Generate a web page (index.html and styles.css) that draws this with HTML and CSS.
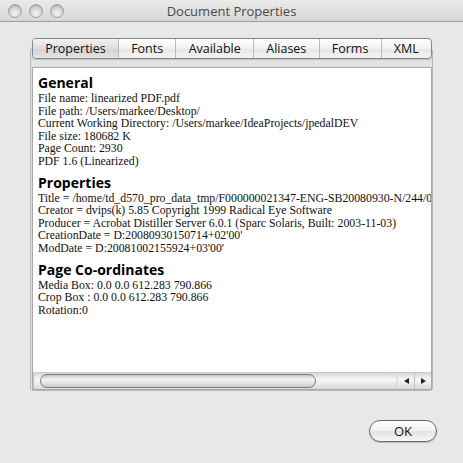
FILE: index.html
```html
<!DOCTYPE html>
<html lang="en">
<head>
  <meta charset="UTF-8">
  <title>Document Properties</title>
  <link rel="stylesheet" href="styles.css">
</head>
<body>
  <div class="window">
    <div class="titlebar">
      <div class="lights">
        <span class="light"></span>
        <span class="light"></span>
        <span class="light"></span>
      </div>
      <div class="title">Document Properties</div>
      <div></div>
    </div>

    <div class="dialog">
      <div class="tabpane">
        <ul class="tabs">
          <li class="tab active">Properties</li>
          <li class="tab">Fonts</li>
          <li class="tab">Available</li>
          <li class="tab">Aliases</li>
          <li class="tab">Forms</li>
          <li class="tab">XML</li>
        </ul>

        <div class="pane">
          <div class="viewer">
            <div class="doc">
              <h2>General</h2>
              <p>File name: linearized PDF.pdf</p>
              <p>File path: /Users/markee/Desktop/</p>
              <p>Current Working Directory: /Users/markee/IdeaProjects/jpedalDEV</p>
              <p>File size: 180682 K</p>
              <p>Page Count: 2930</p>
              <p>PDF 1.6 (Linearized)</p>

              <h2>Properties</h2>
              <p>Title = /home/td_d570_pro_data_tmp/F000000021347-ENG-SB20080930-N/244/0001.ps</p>
              <p>Creator = dvips(k) 5.85 Copyright 1999 Radical Eye Software</p>
              <p>Producer = Acrobat Distiller Server 6.0.1 (Sparc Solaris, Built: 2003-11-03)</p>
              <p>CreationDate = D:20080930150714+02'00'</p>
              <p>ModDate = D:20081002155924+03'00'</p>

              <h2>Page Co-ordinates</h2>
              <p>Media Box: 0.0 0.0 612.283 790.866</p>
              <p>Crop Box : 0.0 0.0 612.283 790.866</p>
              <p>Rotation:0</p>
            </div>

            <div class="hscroll">
              <div class="track"><div class="thumb"></div></div>
              <div class="arrow left"></div>
              <div class="arrow right"></div>
            </div>
          </div>
        </div>
      </div>

      <div class="buttons">
        <button class="ok">OK</button>
      </div>
    </div>
  </div>
</body>
</html>
```

FILE: styles.css
```css
/* window frame */
body {
  margin: 0;
  background: #e8e8e8;
  font-family: 'Open Sans', 'DejaVu Sans', sans-serif;
}

.window {
  width: 463px;
  height: 463px;
  display: flex;
  flex-direction: column;
  background: #e8e8e8;
}

.titlebar {
  height: 21px;
  display: grid;
  grid-template-columns: 1fr auto 1fr;
  align-items: center;
  background: linear-gradient(to bottom, #ebebeb, #d6d6d6);
  border-bottom: 1px solid #9d9d9d;
}

.lights {
  display: flex;
  gap: 7px;
  padding-left: 8px;
}

.light {
  width: 12px;
  height: 12px;
  border-radius: 50%;
  border: 1px solid #a3a3a3;
  background: radial-gradient(circle at 50% 70%, #f4f4f4 0%, #d9d9d9 45%, #bdbdbd 100%);
  box-shadow: inset 0 1px 1px rgba(0, 0, 0, 0.15);
}

.title {
  font-size: 13px;
  color: #4a4a4a;
}

/* dialog body */
.dialog {
  flex: 1;
  padding: 16px 30px 0 30px;
  display: flex;
  flex-direction: column;
}

.tabs {
  list-style: none;
  margin: 0 1px 0 2px;
  padding: 0;
  height: 19px;
  display: flex;
  position: relative;
  z-index: 1;
  border: 1px solid #858585;
  border-radius: 4px;
  background: linear-gradient(to bottom, #ffffff, #f1f1f1 50%, #e6e6e6 51%, #f4f4f4);
  box-shadow: 0 1px 1px rgba(0, 0, 0, 0.15);
}

.tab {
  flex: 1 1 auto;
  text-align: center;
  font-size: 12.5px;
  line-height: 19px;
  color: #111;
  border-left: 1px solid #b9b9b9;
}

.tab:first-child {
  border-left: none;
}

.tab.active {
  background: linear-gradient(to bottom, #f2f2f2, #dedede 50%, #d2d2d2 51%, #e4e4e4);
  border-radius: 3px 0 0 3px;
}

.pane {
  margin-top: -11px;
  padding: 18px 0 0 1px;
  border: 1px solid #b8b8b8;
  border-radius: 3px;
  background: #e2e2e2;
}

.viewer {
  border: 1px solid #a9a9a9;
  background: #fff;
  display: flex;
  flex-direction: column;
}

.doc {
  height: 299px;
  padding: 5px 0 0 5px;
  overflow: hidden;
  white-space: nowrap;
}

.doc h2 {
  margin: 5px 0 0;
  font-size: 14px;
  line-height: 19px;
  font-weight: bold;
  color: #000;
}

.doc h2:first-child {
  margin-top: 0;
}

.doc p {
  margin: 0;
  font-family: 'Liberation Serif', serif;
  font-size: 11.8px;
  line-height: 12.6px;
  color: #111;
}

/* horizontal scroll bar */
.hscroll {
  height: 16px;
  display: flex;
  border-top: 1px solid #c9c9c9;
  background: linear-gradient(to bottom, #d8d8d8, #f6f6f6 40%, #eeeeee 60%, #d9d9d9);
}

.track {
  flex: 1;
  padding: 1px 0 1px 6px;
  border-left: 1px solid #c0c0c0;
  border-radius: 0 8px 8px 0;
  border-right: 1px solid #c8c8c8;
  display: flex;
}

.thumb {
  width: 274px;
  border: 1px solid #7c7c7c;
  border-radius: 8px;
  background: linear-gradient(to bottom, #c4c4c4, #f2f2f2 35%, #e4e4e4 65%, #c9c9c9);
}

.arrow {
  width: 16px;
  position: relative;
}

.arrow.left {
  border-right: 1px solid #c0c0c0;
}

.arrow::after {
  content: "";
  position: absolute;
  top: 5px;
  left: 6px;
  border-top: 3.5px solid transparent;
  border-bottom: 3.5px solid transparent;
}

.arrow.left::after {
  border-right: 5px solid #222;
}

.arrow.right::after {
  border-left: 5px solid #222;
}

/* button row */
.buttons {
  display: flex;
  justify-content: flex-end;
  margin: 29px -4px 0 0;
}

.ok {
  width: 68px;
  height: 22px;
  padding: 0;
  font-family: 'Open Sans', 'DejaVu Sans', sans-serif;
  font-size: 13px;
  color: #111;
  border: 1px solid #6a6a6a;
  border-radius: 11px;
  background: linear-gradient(to bottom, #ffffff, #f1f1f1 50%, #e3e3e3 51%, #f7f7f7);
  box-shadow: 0 1px 1px rgba(0, 0, 0, 0.2);
}
```
